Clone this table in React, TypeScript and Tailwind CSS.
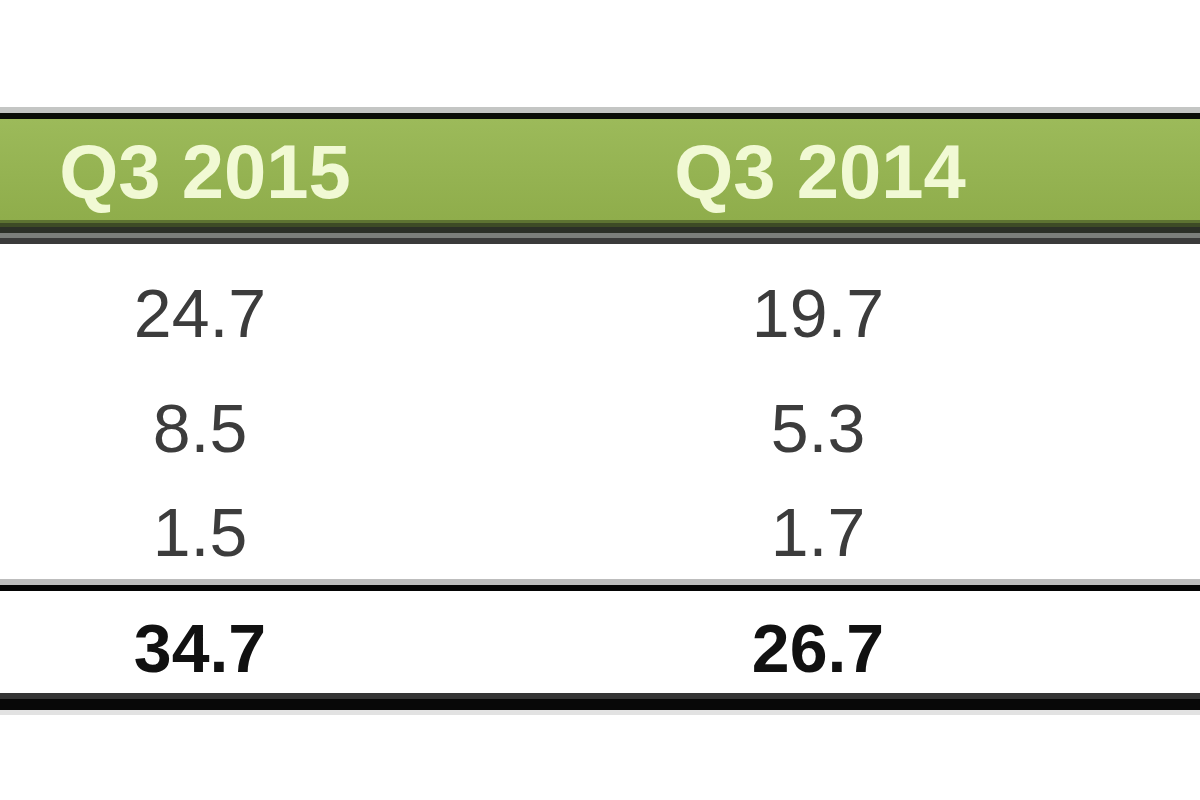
import React from "react";

const rows = [
  ["24.7", "19.7", "h-[116px]"],
  ["8.5", "5.3", "h-[114px]"],
  ["1.5", "1.7", "h-[94px]"],
];

export default function App() {
  return (
    <div className="w-[1200px] h-[800px] bg-white overflow-hidden" style={{ fontFamily: '"Liberation Sans", Arial, sans-serif' }}>
      <div className="h-[107px]" />
      <div className="h-[6px] bg-[#c4c6c4]" />
      <div className="h-[6px] bg-[#0a0d08]" />
      <div className="h-[101px] bg-gradient-to-b from-[#9cba5a] to-[#8fad4b] grid grid-cols-[410px_820px] items-center">
        <div className="text-center text-[76px] font-bold leading-none text-[#f1f9d4] pt-[4px]">Q3 2015</div>
        <div className="text-center text-[76px] font-bold leading-none text-[#f1f9d4] pt-[4px]">Q3 2014</div>
      </div>
      <div className="h-[3px] bg-[#5d7232]" />
      <div className="h-[4px] bg-[#3d4a26]" />
      <div className="h-[6px] bg-[#2b2f27]" />
      <div className="h-[5px] bg-[#7b7e7b]" />
      <div className="h-[6px] bg-[#3a3a3a]" />
      <div className="pt-[11px]">
        {rows.map(([a, b, h]) => (
          <div key={a} className={`${h} grid grid-cols-[400px_836px] items-center`}>
            <div className="text-center text-[68px] leading-none text-[#3c3c3c]">{a}</div>
            <div className="text-center text-[68px] leading-none text-[#3c3c3c]">{b}</div>
          </div>
        ))}
      </div>
      <div className="h-[6px] bg-[#bdbdbd]" />
      <div className="h-[6px] bg-[#050505]" />
      <div className="h-[102px] pt-[12px] grid grid-cols-[400px_836px] items-center">
        <div className="text-center text-[68px] font-bold leading-none text-[#111]">34.7</div>
        <div className="text-center text-[68px] font-bold leading-none text-[#111]">26.7</div>
      </div>
      <div className="h-[6px] bg-[#353535]" />
      <div className="h-[11px] bg-[#080808]" />
      <div className="h-[5px] bg-[#e2e2e2]" />
    </div>
  );
}
